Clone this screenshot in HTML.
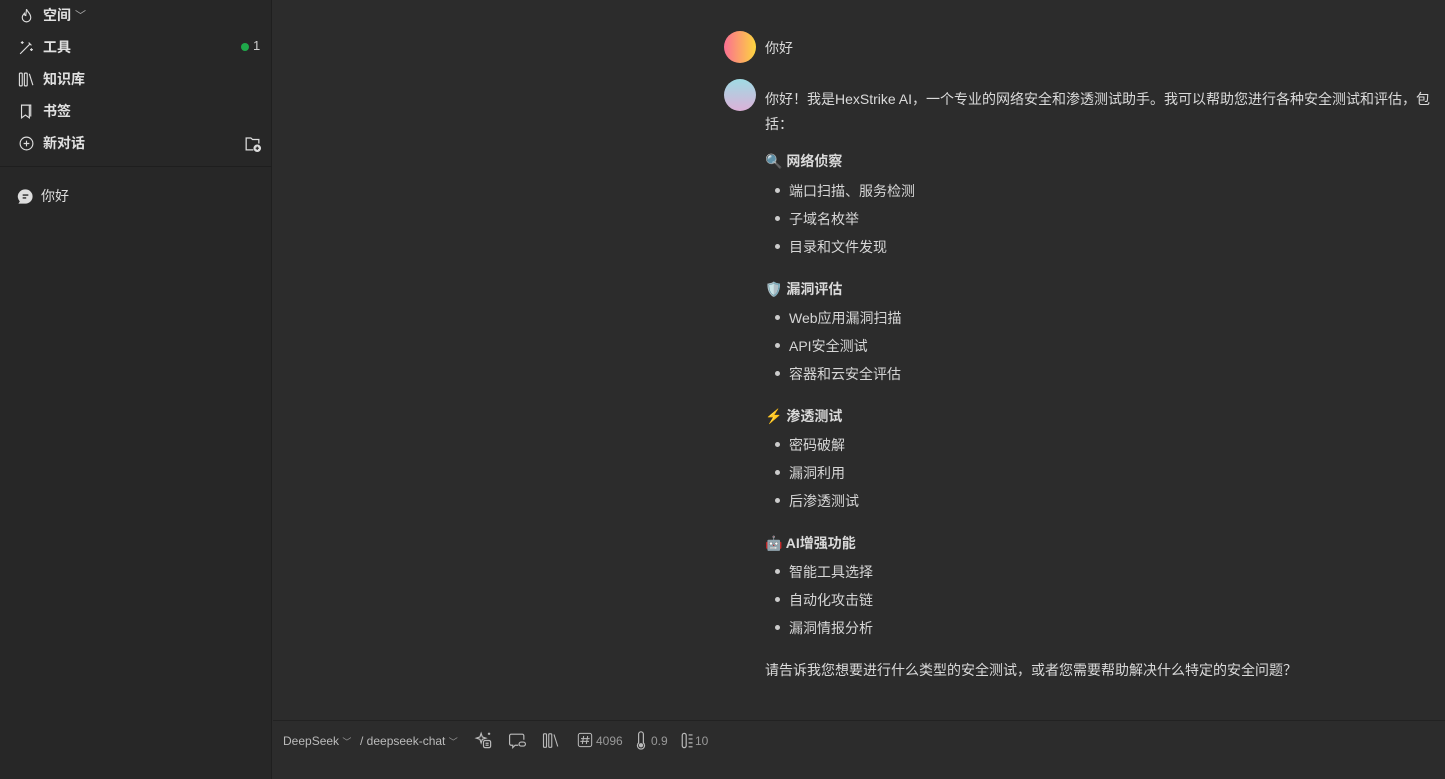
<!DOCTYPE html>
<html><head><meta charset="utf-8"><style>
*{margin:0;padding:0;box-sizing:border-box}
body{width:1445px;height:779px;overflow:hidden;background:#2c2c2c;font-family:"Liberation Sans","Noto Sans CJK SC",sans-serif;color:#dcdcdc;position:relative}
#sb{position:absolute;left:0;top:0;width:272px;height:779px;background:#272727;border-right:1px solid #1f1f1f}
.it{position:absolute;left:18px;height:20px;display:flex;align-items:center;font-size:14px;font-weight:bold;color:#e0e0e0}
.it svg{margin-right:8px}
.abs{position:absolute}
.main{position:absolute;left:765px;font-size:14px;color:#dadada;white-space:nowrap}
.h{font-weight:bold}
.li{position:absolute;left:789px;font-size:14px;color:#d6d6d6}
.dot{position:absolute;left:775px;width:5px;height:5px;border-radius:50%;background:#ccc}
#bar{position:absolute;left:273px;top:720px;right:0;bottom:0;border-top:1px solid #222;font-size:12px;color:#bbb}
#bar span,#bar svg{position:absolute}
</style></head><body>
<div id="sb">
 <div class="it" style="top:5px"><svg width="17" height="17" viewBox="0 0 24 24" fill="none" stroke="#ddd" stroke-width="1.6"><path d="M12 3c1 4 6 6 6 12a6 6 0 0 1-12 0c0-3 2-5 3-6 0 2 1 3 2 3 0-3 1-6 1-9z"/></svg>空间<span style="font-weight:normal;color:#aaa;font-size:11px;margin-left:4px">﹀</span></div>
 <div class="it" style="top:37px"><svg width="17" height="17" viewBox="0 0 24 24" fill="none" stroke="#ddd" stroke-width="1.6"><path d="M3 21L17 7M15 5l4 4M6 3v4M4 5h4M19 13v4M17 15h4M11 3h0"/></svg>工具</div>
 <div class="abs" style="left:241px;top:43px;width:8px;height:8px;border-radius:50%;background:#1fa84a"></div>
 <div class="abs" style="left:253px;top:38px;font-size:13px;color:#ccc">1</div>
 <div class="it" style="top:69px"><svg width="17" height="17" viewBox="0 0 24 24" fill="none" stroke="#ddd" stroke-width="1.6"><rect x="2" y="3" width="4" height="18" rx="1"/><rect x="9" y="3" width="4" height="18" rx="1"/><path d="M16 4l5 16"/></svg>知识库</div>
 <div class="it" style="top:101px"><svg width="17" height="17" viewBox="0 0 24 24" fill="none" stroke="#ddd" stroke-width="1.6"><path d="M5 3h11v18l-5.5-4L5 21z"/><path d="M16 3h2v16"/></svg>书签</div>
 <div class="it" style="top:133px"><svg width="17" height="17" viewBox="0 0 24 24" fill="none" stroke="#ddd" stroke-width="1.6"><circle cx="12" cy="12" r="9"/><path d="M12 8v8M8 12h8"/></svg>新对话</div>
 <svg class="abs" style="left:243px;top:134px" width="19" height="19" viewBox="0 0 24 24" fill="none" stroke="#ddd" stroke-width="1.6"><path d="M13 20H4V5h6l2 2h8v5"/><circle cx="18" cy="18" r="4" fill="#ddd"/><path d="M18 16v4M16 18h4" stroke="#272727"/></svg>
 <div class="abs" style="left:0;top:166px;width:272px;height:1px;background:#1e1e1e"></div>
 <svg class="abs" style="left:17px;top:188px" width="17" height="17" viewBox="0 0 24 24"><path d="M12 2a10 10 0 0 1 0 20H2l2-3A10 10 0 0 1 12 2z" fill="#ddd"/><path d="M8 10h8M8 14h5" stroke="#272727" stroke-width="2"/></svg>
 <div class="abs" style="left:41px;top:186px;font-size:14px;color:#ddd">你好</div>
</div>

<div class="abs" style="left:724px;top:31px;width:32px;height:32px;border-radius:50%;background:linear-gradient(90deg,#fb6f92,#fcd53f)"></div>
<div class="main" style="top:38px">你好</div>
<div class="abs" style="left:724px;top:79px;width:32px;height:32px;border-radius:50%;background:linear-gradient(180deg,#9fdbe4,#dcb1d8)"></div>
<div class="main" style="top:89px">你好！我是HexStrike AI，一个专业的网络安全和渗透测试助手。我可以帮助您进行各种安全测试和评估，包</div>
<div class="main" style="top:114px">括：</div>

<div class="main h" style="top:151px">🔍 网络侦察</div>
<div class="dot" style="top:188px"></div><div class="li" style="top:181px">端口扫描、服务检测</div>
<div class="dot" style="top:216px"></div><div class="li" style="top:209px">子域名枚举</div>
<div class="dot" style="top:244px"></div><div class="li" style="top:237px">目录和文件发现</div>

<div class="main h" style="top:279px">🛡️ 漏洞评估</div>
<div class="dot" style="top:315px"></div><div class="li" style="top:308px">Web应用漏洞扫描</div>
<div class="dot" style="top:343px"></div><div class="li" style="top:336px">API安全测试</div>
<div class="dot" style="top:371px"></div><div class="li" style="top:364px">容器和云安全评估</div>

<div class="main h" style="top:406px">⚡ 渗透测试</div>
<div class="dot" style="top:442px"></div><div class="li" style="top:435px">密码破解</div>
<div class="dot" style="top:470px"></div><div class="li" style="top:463px">漏洞利用</div>
<div class="dot" style="top:498px"></div><div class="li" style="top:491px">后渗透测试</div>

<div class="main h" style="top:533px">🤖 AI增强功能</div>
<div class="dot" style="top:569px"></div><div class="li" style="top:562px">智能工具选择</div>
<div class="dot" style="top:597px"></div><div class="li" style="top:590px">自动化攻击链</div>
<div class="dot" style="top:625px"></div><div class="li" style="top:618px">漏洞情报分析</div>

<div class="main" style="top:660px">请告诉我您想要进行什么类型的安全测试，或者您需要帮助解决什么特定的安全问题？</div>

<div id="bar">
 <span style="left:10px;top:13px">DeepSeek <span style="position:static;color:#999;font-size:9px">﹀</span></span>
 <span style="left:87px;top:13px">/ deepseek-chat <span style="position:static;color:#999;font-size:9px">﹀</span></span>
 <svg style="left:201px;top:10px" width="19" height="19" viewBox="0 0 24 24" fill="none" stroke="#bbb" stroke-width="1.5"><path d="M9 3l1.5 4.5L15 9l-4.5 1.5L9 15l-1.5-4.5L3 9l4.5-1.5z"/><rect x="12" y="12" width="9" height="9" rx="2"/><path d="M14.5 15.5h4M14.5 18h4M19 2v3M17.5 3.5h3"/></svg>
 <svg style="left:235px;top:10px" width="19" height="19" viewBox="0 0 24 24" fill="none" stroke="#bbb" stroke-width="1.5"><path d="M20 11V6a2 2 0 0 0-2-2H4a2 2 0 0 0-2 2v10a2 2 0 0 0 2 2h2v3l3-3h4"/><rect x="14" y="14" width="8" height="5" rx="2.5"/></svg>
 <svg style="left:269px;top:10px" width="18" height="19" viewBox="0 0 24 24" fill="none" stroke="#bbb" stroke-width="1.5"><rect x="2" y="3" width="4" height="18" rx="1"/><rect x="9" y="3" width="4" height="18" rx="1"/><path d="M16 4l5 16"/></svg>
 <svg style="left:304px;top:11px" width="16" height="16" viewBox="0 0 24 24" fill="none" stroke="#bbb" stroke-width="1.5"><rect x="2" y="2" width="20" height="20" rx="3"/><path d="M10 6l-2 12M16 6l-2 12M6 10h13M5 14h13"/></svg>
 <span style="left:323px;top:13px;color:#999">4096</span>
 <svg style="left:361px;top:10px" width="14" height="19" viewBox="0 0 16 24" fill="none" stroke="#bbb" stroke-width="1.5"><path d="M5 15V4a3 3 0 0 1 6 0v11a4.5 4.5 0 1 1-6 0z"/><circle cx="8" cy="18" r="2" fill="#bbb"/></svg>
 <span style="left:378px;top:13px;color:#999">0.9</span>
 <svg style="left:407px;top:10px" width="14" height="19" viewBox="0 0 16 24" fill="none" stroke="#bbb" stroke-width="1.5"><rect x="2" y="3" width="5" height="18" rx="2.5"/><path d="M10 5h5M10 10h5M10 15h5M10 20h5"/></svg>
 <span style="left:422px;top:13px;color:#999">10</span>
</div>
</body></html>
